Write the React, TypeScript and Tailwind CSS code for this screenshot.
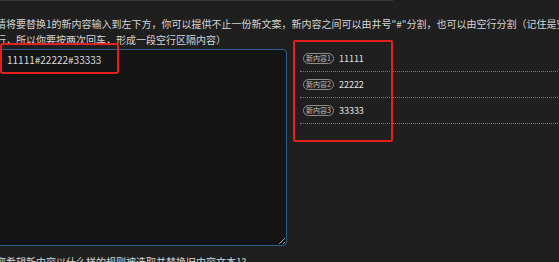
const items = ["11111", "22222", "33333"];

const App = () => {
  return (
    <div className="relative w-[559px] h-[262px] overflow-hidden bg-[#1f1f1f] text-[#d6d6d6] font-['Noto_Sans_CJK_SC','Noto_Sans',sans-serif]">
      <div className="w-[393px] border-t border-[#3a3a3a]" />

      <div className="-ml-[6px] w-[640px]">
        {/* intro */}
        <div className="pt-[15px] pl-[2px] text-[10px] leading-[16px] whitespace-nowrap">
          <div>
            请将要替换1的新内容输入到左下方，你可以提供不止一份新文案，新内容之间可以由井号"#"分割，也可以由空行分割（记住是空
          </div>
          <div>行，所以你要按两次回车，形成一段空行区隔内容）</div>
        </div>

        <div className="flex items-start gap-[13px]">
          <textarea
            className="mt-[1px] w-[293px] h-[197px] rounded-[4px] border border-[#2c5d92] bg-[#141414] pl-[12px] pt-[3px] text-[10px] leading-[14px] text-[#dadada] outline-none resize [color-scheme:dark]"
            defaultValue="11111#22222#33333"
          />

          {/* preview list */}
          <div className="-mt-[2px] w-[300px]">
            {items.map((item, i) => (
              <div
                key={item}
                className="flex h-[26px] items-center gap-[5px] border-b border-dotted border-[#7a7a7a] pl-[3px]"
              >
                <span className="flex h-[11px] items-center rounded-full border border-[#8c8c8c] px-[2px] text-[7px] text-[#c0c0c0]">
                  新内容{i + 1}
                </span>
                <span className="text-[9px] text-[#e2e2e2]">{item}</span>
              </div>
            ))}
          </div>
        </div>

        <div className="mt-[8px] pl-[2px] text-[10px] leading-[16px] whitespace-nowrap">
          您希望新内容以什么样的规则被选取并替换旧内容文本1?
        </div>
      </div>

      {/* red annotation boxes */}
      <div className="absolute left-0 top-[43px] h-[31px] w-[119px] rounded-[3px] border-2 border-[#e3201b]" />
      <div className="absolute left-[293px] top-[40px] h-[102px] w-[100px] rounded-[2px] border-2 border-[#e3201b]" />
    </div>
  );
};

export default App;
